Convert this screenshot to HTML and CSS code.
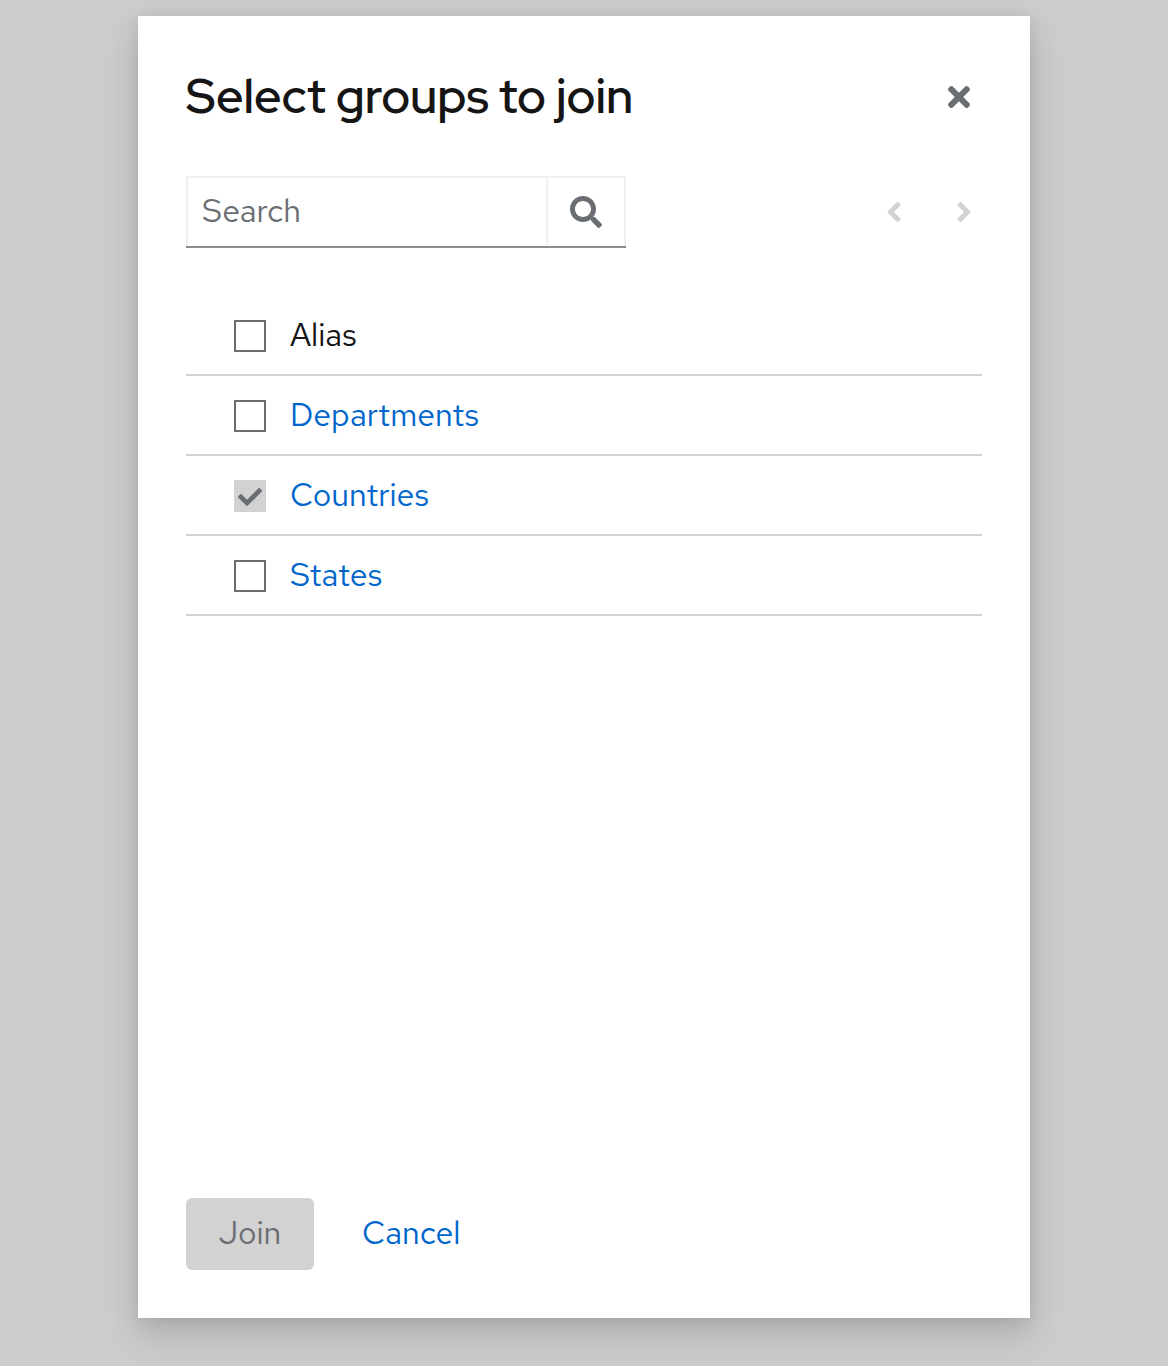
FILE: index.html
```html
<!DOCTYPE html>
<html lang="en">
<head>
  <meta charset="utf-8">
  <meta name="viewport" content="width=device-width, initial-scale=1">
  <title>Select groups to join</title>
  <link rel="stylesheet" href="styles.css">
</head>
<body>
  <main class="modal" role="dialog" aria-labelledby="modal-title">
    <header class="modal-header">
      <h1 class="modal-title" id="modal-title">Select groups to join</h1>
      <button class="icon-button" type="button" aria-label="Close">
        <svg width="22" height="32" viewBox="0 0 352 512" fill="currentColor" aria-hidden="true"><path d="M242.72 256l100.07-100.07c12.28-12.28 12.28-32.19 0-44.48l-22.24-22.24c-12.28-12.28-32.19-12.28-44.48 0L176 189.28 75.93 89.21c-12.28-12.28-32.19-12.28-44.48 0L9.21 111.45c-12.28 12.28-12.28 32.19 0 44.48L109.28 256 9.21 356.07c-12.28 12.28-12.28 32.19 0 44.48l22.24 22.24c12.28 12.28 32.2 12.28 44.48 0L176 322.72l100.07 100.07c12.28 12.28 32.2 12.28 44.48 0l22.24-22.24c12.28-12.28 12.28-32.19 0-44.48L242.72 256z"/></svg>
      </button>
    </header>

    <div class="toolbar">
      <form class="search" role="search">
        <input class="search-input" type="search" placeholder="Search" aria-label="Search groups">
        <button class="search-button" type="button" aria-label="Search">
          <svg width="32" height="32" viewBox="0 0 512 512" fill="currentColor" aria-hidden="true"><path d="M505 442.7L405.3 343c-4.5-4.5-10.6-7-17-7H372c27.6-35.3 44-79.7 44-128C416 93.1 322.9 0 208 0S0 93.1 0 208s93.1 208 208 208c48.3 0 92.7-16.4 128-44v16.3c0 6.4 2.5 12.5 7 17l99.7 99.7c9.4 9.4 24.6 9.4 33.9 0l28.3-28.3c9.4-9.4 9.4-24.6.1-34zM208 336c-70.7 0-128-57.2-128-128 0-70.7 57.2-128 128-128 70.7 0 128 57.2 128 128 0 70.7-57.2 128-128 128z"/></svg>
        </button>
      </form>
      <nav class="pagination" aria-label="Pagination">
        <button class="page-button" type="button" aria-label="Previous page" disabled>
          <svg width="16" height="32" viewBox="0 0 256 512" fill="currentColor" aria-hidden="true"><path d="M31.7 239l136-136c9.4-9.4 24.6-9.4 33.9 0l22.6 22.6c9.4 9.4 9.4 24.6 0 33.9L127.9 256l96.4 96.4c9.4 9.4 9.4 24.6 0 33.9L201.7 409c-9.4 9.4-24.6 9.4-33.9 0l-136-136c-9.5-9.4-9.5-24.6-.1-34z"/></svg>
        </button>
        <button class="page-button" type="button" aria-label="Next page" disabled>
          <svg width="16" height="32" viewBox="0 0 256 512" fill="currentColor" aria-hidden="true"><path d="M224.3 273l-136 136c-9.4 9.4-24.6 9.4-33.9 0l-22.6-22.6c-9.4-9.4-9.4-24.6 0-33.9l96.4-96.4-96.4-96.4c-9.4-9.4-9.4-24.6 0-33.9L54.3 103c9.4-9.4 24.6-9.4 33.9 0l136 136c9.5 9.4 9.5 24.6.1 34z"/></svg>
        </button>
      </nav>
    </div>

    <ul class="group-list">
      <li class="group">
        <span class="check"><input class="check-input" type="checkbox" id="alias"></span>
        <label for="alias">Alias</label>
      </li>
      <li class="group">
        <span class="check"><input class="check-input" type="checkbox" aria-labelledby="departments"></span>
        <a class="link" id="departments" href="#departments">Departments</a>
      </li>
      <li class="group">
        <span class="check">
          <input class="check-input" type="checkbox" aria-labelledby="countries" checked disabled>
          <svg class="check-mark" width="24" height="24" viewBox="0 0 512 512" fill="currentColor" aria-hidden="true"><path d="M173.898 439.404l-166.4-166.4c-9.997-9.997-9.997-26.206 0-36.204l36.203-36.204c9.997-9.998 26.207-9.998 36.204 0L192 312.69 432.095 72.596c9.997-9.997 26.207-9.997 36.204 0l36.203 36.204c9.997 9.997 9.997 26.206 0 36.204l-294.4 294.401c-9.998 9.997-26.207 9.997-36.204-.001z"/></svg>
        </span>
        <a class="link" id="countries" href="#countries">Countries</a>
      </li>
      <li class="group">
        <span class="check"><input class="check-input" type="checkbox" aria-labelledby="states"></span>
        <a class="link" id="states" href="#states">States</a>
      </li>
    </ul>

    <footer class="modal-footer">
      <button class="button button-primary" type="button" disabled>Join</button>
      <button class="button button-link" type="button">Cancel</button>
    </footer>
  </main>
</body>
</html>
```
FILE: styles.css
```css
:root {
  --text: #151515;
  --muted: #6a6e73;
  --blue: #0066cc;
  --grey: #d2d2d2;
  --field-line: #f0f0f0;
}

* {
  box-sizing: border-box;
}

body {
  margin: 0;
  padding: 16px 16px 48px;
  min-height: 100vh;
  display: flex;
  justify-content: center;
  background: #cccccc;
  color: var(--text);
  font-family: "Red Hat Text", Lato, sans-serif;
  font-size: 32px;
  line-height: 48px;
}

button,
input {
  margin: 0;
  border: 0;
  background: none;
  color: inherit;
  font: inherit;
}

svg {
  display: block;
}

.modal {
  display: flex;
  flex-direction: column;
  width: 100%;
  max-width: 892px;
  padding: 48px;
  background: #ffffff;
  box-shadow: 0 16px 32px rgba(3, 3, 3, 0.16), 0 0 12px rgba(3, 3, 3, 0.08);
}

.modal-header {
  display: flex;
  align-items: center;
  justify-content: space-between;
}

.modal-title {
  margin: 0;
  font-family: "Red Hat Display Medium", "Red Hat Display", "Red Hat Text", Lato, sans-serif;
  font-size: 48px;
  font-weight: 600;
  line-height: 64px;
}

.icon-button {
  padding: 14px 12px 12px;
  color: var(--muted);
}

.toolbar {
  display: flex;
  align-items: center;
  justify-content: space-between;
  margin-top: 48px;
}

.search {
  display: flex;
  width: 440px;
  height: 72px;
  border-bottom: 2px solid #8a8d90;
}

.search-input {
  flex: 1;
  min-width: 0;
  padding: 0 14px 2px;
  border: 2px solid var(--field-line);
  border-bottom: 0;
  outline: 0;
  appearance: none;
}

.search-input::placeholder {
  color: var(--muted);
  opacity: 1;
}

.search-button {
  padding: 0 22px;
  border: 2px solid var(--field-line);
  border-width: 2px 2px 0 0;
  color: var(--muted);
}

.pagination {
  display: flex;
  gap: 34px;
}

.page-button {
  padding: 12px 10px;
  color: var(--grey);
}

.group-list {
  flex: 1;
  margin: 48px 0;
  padding: 0;
  list-style: none;
}

.group {
  display: flex;
  align-items: center;
  gap: 24px;
  height: 80px;
  padding: 0 48px;
  border-bottom: 2px solid var(--grey);
}

.check {
  display: grid;
  place-items: center;
  padding-top: 2px;
}

.check-input,
.check-mark {
  grid-area: 1 / 1;
}

.check-input {
  width: 32px;
  height: 32px;
  border: 2px solid var(--muted);
  appearance: none;
}

.check-input:checked {
  border-color: var(--grey);
  background: var(--grey);
}

.check-mark {
  margin-top: 2px;
  color: var(--muted);
  pointer-events: none;
}

.link {
  color: var(--blue);
  text-decoration: none;
}

.modal-footer {
  display: flex;
  gap: 16px;
}

.button {
  min-width: 128px;
  height: 72px;
  padding: 0 32px 2px;
  border-radius: 6px;
}

.button-primary {
  background: var(--grey);
  color: var(--muted);
}

.button-link {
  color: var(--blue);
}
```
